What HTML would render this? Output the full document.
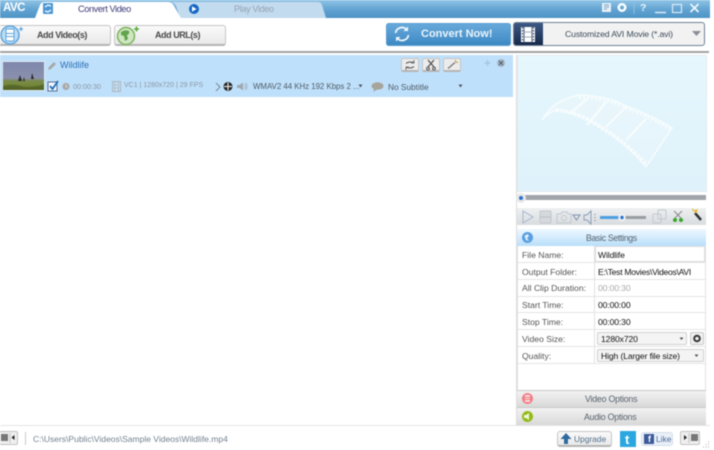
<!DOCTYPE html>
<html><head><meta charset="utf-8">
<style>
html,body{margin:0;padding:0;background:#fff;}
body{width:714px;height:450px;overflow:hidden;position:relative;font-family:"Liberation Sans",sans-serif;}
#w{position:absolute;left:0;top:0;width:714px;height:450px;filter:blur(.45px);overflow:hidden;}
.a{position:absolute;white-space:nowrap;}
.btn{position:absolute;box-sizing:border-box;border:1px solid #c6c6c6;border-bottom:2px solid #b4b4b4;border-radius:3px;background:linear-gradient(#fafafa,#e9e9e9);}
.l{position:absolute;left:522px;font-size:8.6px;color:#555;white-space:nowrap;}
.v{position:absolute;left:598px;font-size:8.6px;color:#111;white-space:nowrap;letter-spacing:-.12px;}
.rl{position:absolute;left:517px;width:189px;height:1px;background:#e4e4e4;}
.sb{position:absolute;width:18px;height:14px;top:58px;box-sizing:border-box;border:1px solid #c4c4c4;border-bottom:2px solid #b4b4b4;border-radius:2px;background:#ececec;}
</style></head><body><div id="w">

<!-- title bar -->
<div class="a" style="left:0;top:0;width:710px;height:18px;background:linear-gradient(#8fc3e6,#5da0d0 60%,#4f94c6);"></div>
<div class="a" style="left:3px;top:2px;font-size:11.5px;font-weight:bold;color:#fff;letter-spacing:-.5px;">AVC</div>
<svg class="a" style="left:30px;top:0" width="300" height="19">
<path d="M150 18 L146 6 Q144 2 140 2 L288 2 Q291 2 292 5 L296 18Z" fill="#c3dbee"/>
<path d="M5 18 L10 5 Q11 2 15 2 L138 2 Q142 2 144 6 L151 18Z" fill="#fff"/>
<rect x="13" y="3" width="10" height="11" rx="1" fill="#4b97d4"/>
<path d="M15 7l3-2 3 1M21 10l-3 2-3-1" stroke="#fff" stroke-width="1.2" fill="none"/>
<circle cx="164" cy="9" r="5" fill="#1668c4"/><path d="M162 6.2v5.6l4.5-2.8z" fill="#fff"/>
</svg>
<div class="a" style="left:78px;top:4px;font-size:9.2px;color:#3c3c78;letter-spacing:-.4px;">Convert Video</div>
<div class="a" style="left:234px;top:4px;font-size:9.2px;color:#94a4b4;letter-spacing:-.4px;">Play Video</div>
<!-- window controls -->
<svg class="a" style="left:598px;top:0" width="112" height="18">
<rect x="4" y="3" width="9" height="9" fill="#e6eff7"/><path d="M6 5h5M6 7h5M6 9h3" stroke="#5b8db5" stroke-width=".8"/>
<circle cx="24" cy="7.500" r="3.300" fill="none" stroke="#fff" stroke-width="2.400"/>
<path d="M36 2v12" stroke="#8cc0e0"/>
<path d="M57 12.500h11" stroke="#dbeaf5" stroke-width="1.500"/>
<rect x="74.500" y="4.500" width="9" height="8" fill="none" stroke="#dbeaf5" stroke-width="1.200"/>
<path d="M92.500 4l8 8M100.500 4l-8 8" stroke="#f2f7fb" stroke-width="1.600"/>
</svg>
<div class="a" style="left:640px;top:2px;font-size:10.5px;font-weight:bold;color:#eaf3fa;">?</div>

<!-- toolbar -->
<div class="btn" style="left:-3px;top:25px;width:114px;height:21px;"></div>
<div class="a" style="left:37px;top:30px;font-size:9px;font-weight:bold;color:#4a4a4a;letter-spacing:-.45px;">Add Video(s)</div>
<svg class="a" style="left:0;top:24px" width="26" height="22">
<circle cx="10" cy="11" r="9" fill="#bcdcf3" stroke="#5fa5dc" stroke-width="1.500"/>
<rect x="6" y="5" width="8" height="12" fill="#fff" stroke="#5fa5dc"/><path d="M6 9.500h8M6 12.500h8" stroke="#5fa5dc"/>
<path d="M19 5h4M21 3v4" stroke="#5fa5dc" stroke-width="1.300"/>
</svg>
<div class="btn" style="left:114px;top:25px;width:112px;height:21px;"></div>
<div class="a" style="left:155px;top:30px;font-size:9px;font-weight:bold;color:#4a4a4a;letter-spacing:-.45px;">Add URL(s)</div>
<svg class="a" style="left:115px;top:24px" width="26" height="22">
<circle cx="11" cy="12" r="8.500" fill="#cfe6c2" stroke="#7cb45c" stroke-width="1.500"/>
<path d="M6 8q4-3 8-1 1 3-2 4l1 4-3 2-1-5-3-1z" fill="#62a44c"/>
<path d="M19 5h5M21.500 2.500v5" stroke="#55a83a" stroke-width="1.400"/>
</svg>

<!-- convert now -->
<div class="a" style="left:386px;top:23px;width:125px;height:23px;border-radius:3px;background:linear-gradient(#69abdc,#3c87c2);box-shadow:inset 0 0 0 1px #5a9ccf;"></div>
<svg class="a" style="left:393px;top:25px" width="18" height="18" fill="none" stroke="#f2f8fc" stroke-width="1.700">
<path d="M2.500 8A6.500 6.500 0 0 1 14 5"/><path d="M15.500 10A6.500 6.500 0 0 1 4 13"/>
<path d="M15 1.500V6h-4.500z" fill="#f2f8fc" stroke="none"/><path d="M3 16.500V12h4.500z" fill="#f2f8fc" stroke="none"/>
</svg>
<div class="a" style="left:421px;top:28px;font-size:11px;font-weight:bold;color:#eaf4fb;">Convert Now!</div>

<!-- profile -->
<div class="a" style="left:513px;top:22px;width:192px;height:24px;box-sizing:border-box;border:1px solid #6f8296;border-radius:3px;background:#f2f2f2;"></div>
<div class="a" style="left:514px;top:23px;width:29px;height:22px;background:linear-gradient(#3c5a84,#17294a);border-radius:2px 0 0 2px;"></div>
<div class="a" style="left:521px;top:27px;width:14px;height:15px;background:#fff;"></div>
<svg class="a" style="left:521px;top:27px" width="14" height="15"><path d="M3 0v15M11 0v15" stroke="#1d3050" stroke-width=".8"/><path d="M3 5h8M3 10h8" stroke="#7d8da4" stroke-width=".7"/><path d="M1.500 0v15M12.500 0v15" stroke="#1d3050" stroke-width="1" stroke-dasharray="1.500 1.500"/></svg>
<div class="a" style="left:565px;top:29px;font-size:8.700px;color:#3b4a5a;letter-spacing:-.14px;">Customized AVI Movie (*.avi)</div>
<svg class="a" style="left:692px;top:31px" width="10" height="6"><path d="M0 0h9L4.500 5z" fill="#8a8f96"/></svg>

<!-- separator -->
<div class="a" style="left:0;top:51px;width:709px;height:2px;background:#a4a4a4;"></div>

<!-- list row -->
<div class="a" style="left:0;top:55px;width:513px;height:42px;background:#bfe0fb;"></div>
<div class="a" style="left:3px;top:62px;width:41px;height:28px;background:linear-gradient(#7e88ac 0,#8a90ae 58%,#7a8a50 66%,#74893a 82%,#5a6a2c);box-shadow:0 0 0 1px #dfeaf2;"></div>
<svg class="a" style="left:3px;top:62px" width="41" height="28"><path d="M15 19l2-6 2 6zM28 17l1-6 2 6zM20 19l1-4 1 4z" fill="#2a2a30"/><path d="M0 24q10-3 18 0t23-2v6H0z" fill="#4c5a22" opacity=".6"/></svg>
<svg class="a" style="left:47px;top:60px" width="10" height="11"><path d="M1 10l1-3 5-5 2 2-5 5z" fill="#a8a8a8"/></svg>
<div class="a" style="left:60px;top:60px;font-size:9px;color:#2a70b8;">Wildlife</div>
<svg class="a" style="left:47px;top:79px" width="14" height="13"><rect x="1" y="3" width="9" height="9" fill="#f4f8fc" stroke="#566f96"/><path d="M3 7l2.500 3L11 2" stroke="#1f6fc0" stroke-width="1.800" fill="none"/></svg>
<svg class="a" style="left:62px;top:82px" width="9" height="9"><circle cx="4" cy="4.500" r="3.600" fill="#a9a9a9"/><path d="M4 2.500v2.200l1.600.8" stroke="#ddd" fill="none" stroke-width=".8"/></svg>
<div class="a" style="left:73px;top:82px;font-size:7.200px;color:#8b97a3;">00:00:30</div>
<svg class="a" style="left:112px;top:81px" width="9" height="11"><rect x=".5" y=".5" width="8" height="10" fill="none" stroke="#aeb7be"/><path d="M2.500 0v11M6.500 0v11M2.500 4h4M2.500 7h4" stroke="#aeb7be" stroke-width=".8"/></svg>
<div class="a" style="left:124px;top:82px;font-size:7px;color:#8b97a3;">VC1 | 1280x720 | 29 FPS</div>
<svg class="a" style="left:215px;top:82px" width="7" height="10"><path d="M1 1l4 4-4 4" stroke="#7d8790" fill="none" stroke-width="1"/></svg>
<svg class="a" style="left:223px;top:81px" width="10" height="11"><circle cx="5" cy="5.500" r="4.500" fill="#222"/><path d="M5 1.500v8M1 5.500h8" stroke="#dcdcdc" stroke-width="1.300"/></svg>
<svg class="a" style="left:237px;top:82px" width="11" height="9"><path d="M0 3h2.500L6 .5v8L2.500 6H0z" fill="#a0a8b0"/><path d="M7.500 2q1.500 2.500 0 5M9 1q2 3.500 0 7" stroke="#a0a8b0" fill="none" stroke-width=".8"/></svg>
<div class="a" style="left:253px;top:82px;font-size:7.900px;color:#4f5b66;letter-spacing:-.03px;">WMAV2 44 KHz 192 Kbps 2 ...</div>
<svg class="a" style="left:358px;top:84px" width="6" height="5"><path d="M.5.500h4L2.500 3.500z" fill="#556"/></svg>
<svg class="a" style="left:371px;top:82px" width="13" height="10"><ellipse cx="6.500" cy="4" rx="6" ry="3.800" fill="#a7a49c"/><path d="M3 7l-1 3 4-2.500z" fill="#a7a49c"/></svg>
<div class="a" style="left:388px;top:82px;font-size:8.300px;color:#4f5b66;">No Subtitle</div>
<svg class="a" style="left:458px;top:84px" width="6" height="5"><path d="M.5.500h4L2.500 3.500z" fill="#556"/></svg>

<div class="sb" style="left:401px;"></div>
<div class="sb" style="left:422px;"></div>
<div class="sb" style="left:443px;"></div>
<svg class="a" style="left:401px;top:58px" width="62" height="14" fill="none" stroke="#555" stroke-width="1">
<path d="M5 5.500q3-2.500 8-.8M13 8.500q-3 2.500-8 .8"/><path d="M13 2v3h-3M5 12V9h3" stroke-width=".8"/>
<path d="M27 2l6 7M33 2l-6 7" stroke-width="1.300"/><circle cx="27" cy="10.500" r="1.400"/><circle cx="33" cy="10.500" r="1.400"/>
<path d="M47 10.500l7-6" stroke-width="1.300" stroke="#777"/><path d="M54 2l1 2 2 .5" stroke="#b99c3c"/>
</svg>
<svg class="a" style="left:484px;top:59px" width="22" height="10"><path d="M3.500 1v6M.5 4h6" stroke="#a9c6dc" stroke-width="1.400"/><circle cx="17" cy="4" r="4" fill="#a4b4c2"/><path d="M15 2l4 4M19 2l-4 4" stroke="#4d5d6c"/></svg>

<!-- preview -->
<div class="a" style="left:516px;top:55px;width:1px;height:370px;background:#dcdcdc;"></div>
<div class="a" style="left:517px;top:55px;width:1px;height:137px;background:#e0e0e0;"></div>
<div class="a" style="left:518px;top:56px;width:188px;height:135px;background:linear-gradient(#e6f8fd,#dff1fa);box-shadow:0 0 0 1px #e2ebef;"></div>
<svg class="a" style="left:518px;top:56px" width="188" height="135">
<g fill="none" stroke="#f7fcfd">
<path d="M24 64Q34 48 46 44 54 40 61 39 90 40 108 50 134 60 154 72L128 111Q105 84 79 69 58 56 38 54 28 58 24 64Z" fill="#eef8fc" fill-opacity=".45" stroke-width="1.500"/>
<path d="M38 54Q60 56 79 69 105 84 128 108" stroke-width="4" stroke-dasharray="2.500 2"/>
<path d="M61 41Q90 42 108 52 134 62 152 73" stroke-width="3" stroke-dasharray="2 2"/>
<path d="M54 56L71 41M69 69L88 46M88 71L108 51M108 84L128 63" stroke-width="2.200"/>
</g></svg>

<!-- seek bar -->
<div class="a" style="left:518px;top:195px;width:188px;height:5px;background:#a0a5ab;"></div>
<div class="a" style="left:516px;top:193px;width:10px;height:10px;border-radius:50%;background:#e8e8e8;"></div>
<div class="a" style="left:519px;top:196px;width:4px;height:4px;border-radius:50%;background:#2a72d0;"></div>

<!-- controls -->
<div class="a" style="left:517px;top:208px;width:189px;height:17px;background:linear-gradient(#eef0f2,#d9dcdf);"></div>
<svg class="a" style="left:517px;top:207px" width="189" height="18" fill="none">
<path d="M6 4l10 6-10 6z" stroke="#a4b6ca" stroke-width="1"/>
<rect x="23" y="4" width="11" height="12" rx="1" stroke="#c2c8cd" fill="#d6d9dc"/><path d="M23 10h11" stroke="#bcc2c7"/>
<path d="M40 7h4l1-2h5l1 2h3v9H40z" stroke="#c2c8cd"/><circle cx="47" cy="11" r="2.500" stroke="#c2c8cd"/>
<path d="M56 8h7l-3.500 5z" stroke="#7e93ad"/>
<path d="M67 8h3l4-4v13l-4-4h-3z" stroke="#8ba0b8"/><path d="M78 7v1M78 10v1M78 13v1" stroke="#7a8ea6" stroke-width="1.300"/>
<rect x="83" y="9" width="46" height="3" fill="#999ea3"/><rect x="83" y="9" width="22" height="3" fill="#4f9fe0"/>
<circle cx="105" cy="10.500" r="3.800" fill="#eef0f2"/><circle cx="105" cy="10.500" r="1.700" fill="#2a72d0"/>
<rect x="136" y="7" width="8" height="9" rx="1" stroke="#c4c9ce"/><rect x="141" y="3" width="8" height="9" rx="1" stroke="#c4c9ce"/>
<path d="M157 4l7 7M165 4l-7 7" stroke="#888"/><circle cx="158" cy="13" r="2" fill="#3aa52a"/><circle cx="164" cy="13" r="2" fill="#3aa52a"/>
<path d="M178 6l6 7" stroke="#333" stroke-width="2.500"/><path d="M175 2l2 2 3-1-1 3" fill="#e7b31e" stroke="#e7b31e"/>
</svg>

<!-- basic settings -->
<div class="a" style="left:517px;top:229px;width:189px;height:17px;background:linear-gradient(#eef8ff,#b9dffa);"></div>
<svg class="a" style="left:521px;top:231px" width="13" height="13"><circle cx="6.500" cy="6.500" r="5.500" fill="#5a9fe0"/><path d="M3.500 5l3-2 1.500 2-2 2 2 3-3-1z" fill="#e4f1fb"/></svg>
<div class="a" style="left:586px;top:233px;font-size:8.800px;color:#57636e;letter-spacing:-.35px;">Basic Settings</div>

<div class="a" style="left:594px;top:246px;width:1px;height:117px;background:#e0e0e0;"></div>
<div class="a" style="left:595px;top:246px;width:110px;height:16px;box-shadow:inset 0 0 0 1px #dcdcdc;"></div>
<div class="rl" style="top:262px;"></div><div class="rl" style="top:279px;"></div><div class="rl" style="top:296px;"></div><div class="rl" style="top:312px;"></div><div class="rl" style="top:329px;"></div><div class="rl" style="top:346px;"></div><div class="rl" style="top:363px;"></div>
<div class="a" style="left:517px;top:246px;width:1px;height:144px;background:#e2e2e2;"></div>
<div class="a" style="left:705px;top:246px;width:1px;height:144px;background:#e2e2e2;"></div>

<div class="l" style="top:250px;">File Name:</div><div class="v" style="top:250px;">Wildlife</div>
<div class="l" style="top:267px;">Output Folder:</div><div class="v" style="top:267px;letter-spacing:-.28px;">E:\Test Movies\Videos\AVI</div>
<div class="l" style="top:283px;">All Clip Duration:</div><div class="v" style="top:283px;color:#aaa;">00:00:30</div>
<div class="l" style="top:300px;">Start Time:</div><div class="v" style="top:300px;">00:00:00</div>
<div class="l" style="top:317px;">Stop Time:</div><div class="v" style="top:317px;">00:00:30</div>
<div class="l" style="top:334px;">Video Size:</div>
<div class="a" style="left:597px;top:332px;width:90px;height:13px;box-sizing:border-box;border:1px solid #d0d0d0;border-radius:2px;background:#f4f4f4;"></div>
<div class="v" style="left:601px;top:334px;">1280x720</div>
<svg class="a" style="left:679px;top:337px" width="6" height="4"><path d="M.5 .5h4L2.500 3z" fill="#555"/></svg>
<div class="a" style="left:690px;top:332px;width:14px;height:13px;box-sizing:border-box;border:1px solid #c8c8c8;border-radius:2px;background:#efefef;"></div>
<svg class="a" style="left:693px;top:334px" width="9" height="9"><circle cx="4" cy="4.500" r="2.800" fill="none" stroke="#333" stroke-width="2"/></svg>
<div class="l" style="top:351px;">Quality:</div>
<div class="a" style="left:597px;top:349px;width:107px;height:13px;box-sizing:border-box;border:1px solid #d0d0d0;border-radius:2px;background:#f4f4f4;"></div>
<div class="v" style="left:601px;top:351px;">High (Larger file size)</div>
<svg class="a" style="left:694px;top:354px" width="6" height="4"><path d="M.5 .5h4L2.500 3z" fill="#555"/></svg>

<div class="a" style="left:517px;top:390px;width:189px;height:17px;background:linear-gradient(#f2f2f2,#d9d9d9);border-top:1px solid #c8c8c8;box-sizing:border-box;"></div>
<div class="a" style="left:517px;top:407px;width:189px;height:18px;background:linear-gradient(#f2f2f2,#d9d9d9);border-top:1px solid #c8c8c8;box-sizing:border-box;"></div>
<svg class="a" style="left:521px;top:392px" width="13" height="13"><circle cx="6.500" cy="6.500" r="5.500" fill="#f47d84"/><rect x="4" y="3" width="5" height="7" fill="#fbdcdc"/><path d="M4 5.500h5M4 7.500h5" stroke="#e25f68" stroke-width=".8"/></svg>
<svg class="a" style="left:521px;top:410px" width="13" height="13"><circle cx="6.500" cy="6.500" r="5.500" fill="#93bb18"/><path d="M3 5h2l3-2v7L5 8H3z" fill="#f0f6d8"/></svg>
<div class="a" style="left:585px;top:394px;font-size:8.800px;color:#57636e;letter-spacing:-.22px;">Video Options</div>
<div class="a" style="left:584px;top:412px;font-size:8.800px;color:#57636e;letter-spacing:-.22px;">Audio Options</div>

<!-- status bar -->
<div class="a" style="left:0;top:425px;width:710px;height:1px;background:#e4e4e4;"></div>
<div class="a" style="left:-2px;top:431px;width:20px;height:14px;box-sizing:border-box;border:1px solid #c2c2c2;border-radius:2px;background:#efefef;"></div>
<svg class="a" style="left:0;top:433px" width="18" height="10"><rect x="1" y="1" width="7" height="7" fill="#777"/><path d="M14.500 2v5l-3-2.500z" fill="#222"/><path d="M10 0v10" stroke="#c2c2c2"/></svg>
<div class="a" style="left:25px;top:432px;width:1px;height:13px;background:#c9c9c9;"></div>
<div class="a" style="left:33px;top:434px;font-size:8.500px;color:#73828f;">C:\Users\Public\Videos\Sample Videos\Wildlife.mp4</div>
<div class="btn" style="left:557px;top:431px;width:55px;height:16px;"></div>
<svg class="a" style="left:560px;top:432px" width="12" height="13"><path d="M6 1l5.500 6H8v5H4V7H.5z" fill="#2f6a9e"/></svg>
<div class="a" style="left:574px;top:434px;font-size:8.400px;color:#52708c;">Upgrade</div>
<div class="a" style="left:620px;top:431px;width:16px;height:16px;background:#2aa7df;"></div>
<div class="a" style="left:625px;top:432px;font-size:13px;font-weight:bold;color:#fff;">t</div>
<div class="a" style="left:641px;top:432px;width:32px;height:14px;box-sizing:border-box;border:1px solid #d5deea;border-radius:3px;background:#eaf0f8;"></div>
<div class="a" style="left:644px;top:434px;width:10px;height:10px;background:#3b5a9a;"></div>
<div class="a" style="left:648px;top:434px;font-size:9px;font-weight:bold;color:#fff;">f</div>
<div class="a" style="left:656px;top:434px;font-size:8.400px;color:#4a6a9c;">Like</div>
<div class="a" style="left:680px;top:431px;width:20px;height:14px;box-sizing:border-box;border:1px solid #c2c2c2;border-radius:2px;background:#efefef;"></div>
<svg class="a" style="left:681px;top:433px" width="18" height="10"><path d="M3 2v5l3-2.500z" fill="#222"/><rect x="10" y="1" width="7" height="7" fill="#777"/><path d="M8 0v10" stroke="#c2c2c2"/></svg>
<svg class="a" style="left:702px;top:441px" width="8" height="8"><path d="M6 1h1M3.500 3.500h1M6 3.500h1M1 6h1M3.500 6h1M6 6h1" stroke="#b5b5b5"/></svg>

</div></body></html>
